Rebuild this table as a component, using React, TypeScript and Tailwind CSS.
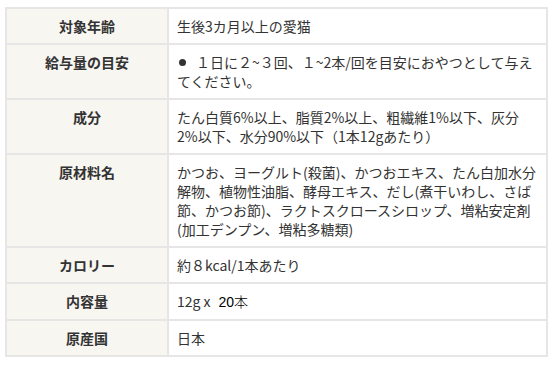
import React from 'react';

interface SpecRow {
  label: string;
  value: React.ReactNode;
}

const rows: SpecRow[] = [
  { label: '対象年齢', value: '生後3カ月以上の愛猫' },
  {
    label: '給与量の目安',
    value: (
      <>
        <span className="mr-[10px] ml-[2px] inline-block h-[7px] w-[7px] rounded-full bg-[#333] align-[2px]" />
        １日に２~３回、１~2本/回を目安におやつとして与えてください。
      </>
    ),
  },
  {
    label: '成分',
    value: 'たん白質6%以上、脂質2%以上、粗繊維1%以下、灰分2%以下、水分90%以下（1本12gあたり）',
  },
  {
    label: '原材料名',
    value:
      'かつお、ヨーグルト(殺菌)、かつおエキス、たん白加水分解物、植物性油脂、酵母エキス、だし(煮干いわし、さば節、かつお節)、ラクトスクロースシロップ、増粘安定剤(加工デンプン、増粘多糖類)',
  },
  { label: 'カロリー', value: '約８kcal/1本あたり' },
  {
    label: '内容量',
    value: (
      <>
        12g x
        <span className="ml-[8px] font-['Liberation_Sans','Noto_Sans_CJK_JP',sans-serif] font-light text-black">20本</span>
      </>
    ),
  },
  { label: '原産国', value: '日本' },
];

export default function App() {
  return (
    <div className="min-h-[365px] w-[556px] bg-white pl-[5px] pt-[7px] font-['Noto_Sans_CJK_JP','Noto_Sans',sans-serif] text-[14px] leading-[19px] text-[#333]">
      <table className="w-[543px] border-collapse border-2 border-[#e6e6e6]">
        <tbody>
          {rows.map((row) => (
            <tr key={row.label}>
              <th className="w-[162px] border-2 border-[#e6e6e6] bg-[#f7f6f1] px-2 pt-[8px] pb-[7px] text-center align-top font-bold">
                {row.label}
              </th>
              <td className="border-2 border-[#e6e6e6] bg-white pt-[8px] pb-[7px] pr-[8px] pl-2 align-top">{row.value}</td>
            </tr>
          ))}
        </tbody>
      </table>
    </div>
  );
}
